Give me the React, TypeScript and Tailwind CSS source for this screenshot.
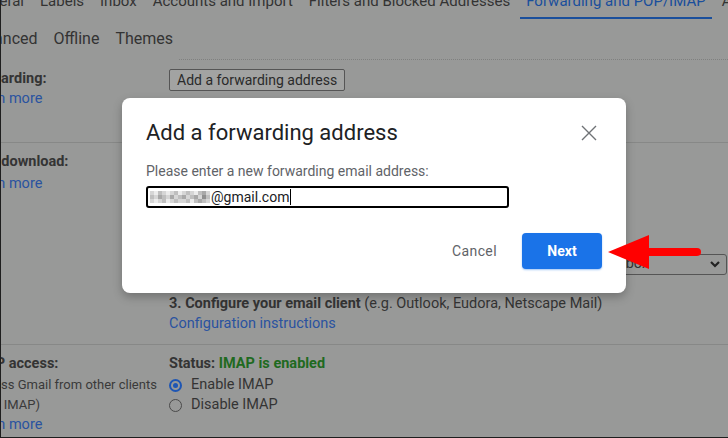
import React from 'react'

// Shades for the pixelated (redacted) part of the email address
const SHADES = ['bg-white', 'bg-[#ececec]', 'bg-[#d6d6d6]', 'bg-[#bfbfbf]', 'bg-[#a8a8a8]', 'bg-[#8f8f8f]']

const PIXELS = [
  [2, 1, 3, 2, 1, 2, 3, 1, 2, 3, 2, 1, 3, 4, 2],
  [3, 2, 4, 3, 2, 4, 2, 3, 4, 2, 3, 4, 2, 5, 3],
  [2, 1, 2, 3, 1, 2, 3, 2, 2, 3, 1, 3, 4, 3, 2],
]

function Redacted() {
  return (
    <span className="inline-flex flex-col mr-px">
      {PIXELS.map((row, r) => (
        <span key={r} className="flex">
          {row.map((s, c) => (
            <span key={c} className={`block w-[4px] h-[4px] ${SHADES[s]}`} />
          ))}
        </span>
      ))}
    </span>
  )
}

function BgLink({ children }: { children: React.ReactNode }) {
  return <div className="text-[#2a53a0] h-5 leading-5">{children}</div>
}

function Background() {
  return (
    <div className="flow-root h-full w-full bg-[#989998] text-[14.5px] text-[#343434]">
      {/* Settings tabs, scrolled partly out of view */}
      <div className="flex items-start gap-[16px] -mt-[9px] -ml-[28px] text-[15px] whitespace-nowrap text-[#333]">
        <div className="leading-5">General</div>
        <div className="leading-5">Labels</div>
        <div className="leading-5">Inbox</div>
        <div className="leading-5">Accounts and Import</div>
        <div className="leading-5">Filters and Blocked Addresses</div>
        <div className="leading-5 pb-[6px] border-b-2 border-[#1a4f9c] text-[#1a4f9c] px-[6px] -mx-[6px]">Forwarding and POP/IMAP</div>
        <div className="leading-5">Add-ons</div>
      </div>
      <div className="flex gap-[16px] mt-[10px] -ml-[34px] text-[16px] whitespace-nowrap text-[#333]">
        <div className="leading-5">Advanced</div>
        <div className="leading-5">Offline</div>
        <div className="leading-5">Themes</div>
      </div>
      <div className="ml-[178px] mt-[10px] border-t border-dotted border-[#7f807f]" />

      {/* Forwarding */}
      <div className="flex pt-[9px] h-[83px] border-b border-[#878887]">
        <div className="w-[200px] -ml-8 shrink-0">
          <div className="font-bold h-5 leading-5">Forwarding:</div>
          <BgLink>Learn more</BgLink>
        </div>
        <div>
          <div className="h-[22px] px-[7px] border border-[#555] rounded-[2px] bg-[#a2a3a2] leading-[20px] text-[#2a2a2a] text-[14px]">
            Add a forwarding address
          </div>
        </div>
      </div>

      {/* POP download */}
      <div className="flex pt-[9px] h-[202px] border-b border-[#878887]">
        <div className="w-[200px] -ml-8 shrink-0">
          <div className="font-bold h-5 leading-5">POP download:</div>
          <div className="mt-[2px]">
            <BgLink>Learn more</BgLink>
          </div>
        </div>
        <div className="flex-1 min-w-0">
          <div className="h-5 leading-5"><span className="font-bold">1. Status: POP is disabled</span></div>
          <div className="h-5 leading-5">Enable POP for all mail</div>
          <div className="h-5 leading-5">Enable POP for mail that arrives from now on</div>
          <div className="flex items-center mt-[42px] h-5 whitespace-nowrap">
            <span className="font-bold">2. When messages are accessed with POP</span>
            <div className="ml-auto mr-[8px] w-[282px] h-[21px] shrink-0 overflow-hidden border border-[#555] rounded-[3px] flex items-center justify-end pl-[6px] pr-[5px] text-[#333]">
              <span className="mr-[60px]">keep Gmail's copy in the Inbox</span>
              <svg className="shrink-0" width="12" height="12" viewBox="0 0 12 12" fill="none">
                <path d="M2 4l4 4 4-4" stroke="#222" strokeWidth="2.2" />
              </svg>
            </div>
          </div>
          <div className="mt-[20px] h-5 leading-5 whitespace-nowrap">
            <span className="font-bold">3. Configure your email client</span> (e.g. Outlook, Eudora, Netscape Mail)
          </div>
          <div>
            <BgLink>Configuration instructions</BgLink>
          </div>
        </div>
      </div>

      {/* IMAP access */}
      <div className="flex pt-[9px]">
        <div className="w-[200px] -ml-8 shrink-0">
          <div className="font-bold h-5 leading-5">IMAP access:</div>
          <div className="h-5 leading-5 text-[13px] text-[#3a3a3a] mt-px">(access Gmail from other clients</div>
          <div className="h-5 leading-5 text-[13px] text-[#3a3a3a]">using IMAP)</div>
          <BgLink>Learn more</BgLink>
        </div>
        <div>
          <div className="h-5 leading-5 font-bold">
            Status: <span className="text-[#1f6a1f]">IMAP is enabled</span>
          </div>
          <div className="h-5 flex items-center gap-[9px] mt-px">
            <span className="w-[13px] h-[13px] rounded-full border-2 border-[#1e56b4] flex items-center justify-center">
              <span className="w-[5px] h-[5px] rounded-full bg-[#1e56b4]" />
            </span>
            <span className="leading-5">Enable IMAP</span>
          </div>
          <div className="h-5 flex items-center gap-[9px]">
            <span className="w-[13px] h-[13px] rounded-full border border-[#4a4a4a]" />
            <span className="leading-5">Disable IMAP</span>
          </div>
        </div>
      </div>
    </div>
  )
}

function Dialog() {
  return (
    <div className="absolute left-[121px] top-[98px] w-[504px] h-[195px] bg-white rounded-[8px] shadow-[0_4px_10px_rgba(0,0,0,0.25)] pl-[24px] pr-[24px] pt-[20px]">
      <div className="flex items-start justify-between">
        <h2 className="text-[22px] leading-[30px] text-[#202124] font-normal">Add a forwarding address</h2>
        <button className="mt-[5px] mr-[3px] w-[20px] h-[20px] flex items-center justify-center">
          <svg width="16" height="16" viewBox="0 0 16 16" fill="none">
            <path d="M1 1l14 14M15 1L1 15" stroke="#6f7276" strokeWidth="1.4" />
          </svg>
        </button>
      </div>
      <div className="mt-[14px] text-[14px] leading-[18px] text-[#5f6368]">
        Please enter a new forwarding email address:
      </div>
      <div className="mt-[6px] w-[363px] h-[22px] border-2 border-black rounded-[3px] flex items-center pl-[2px] text-[14px] text-[#202124]">
        <Redacted />
        <span className="leading-[18px]">@gmail.com</span>
        <span className="ml-px w-px h-[16px] bg-black" />
      </div>
      <div className="flex items-center justify-end gap-[25px] mt-[25px]">
        <button className="text-[14px] font-normal text-[#5f6368] tracking-[0.4px]">Cancel</button>
        <button className="w-[80px] h-[36px] rounded-[4px] bg-[#1a73e8] text-white text-[14px] font-bold shadow-[0_1px_2px_rgba(26,115,232,0.4)]">
          Next
        </button>
      </div>
    </div>
  )
}

function RedArrow() {
  return (
    <svg className="absolute left-[604px] top-[232px]" width="98" height="40" viewBox="0 0 98 40">
      <path d="M3 20L44 3V37Z" fill="#ff0000" />
      <path d="M42 20H92" stroke="#ff0000" strokeWidth="8" strokeLinecap="round" />
    </svg>
  )
}

export default function App() {
  return (
    <div className="relative w-[728px] h-[438px] overflow-hidden font-[Roboto,'Noto_Sans',sans-serif] border-l border-b border-[#1e1e1e]">
      <Background />
      <Dialog />
      <RedArrow />
    </div>
  )
}
